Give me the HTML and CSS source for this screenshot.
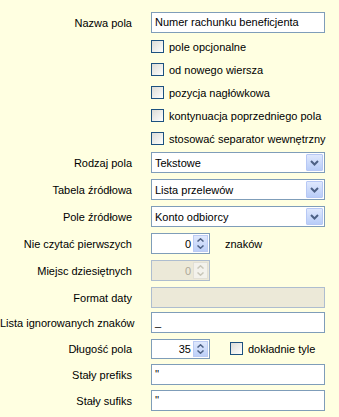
FILE: index.html
```html
<!DOCTYPE html>
<html>
<head>
    <title>Właściwości pola</title>
    <link rel="stylesheet" href="styles.css">
</head>
<body>
    <div class="form">
        <div class="row">
            <label class="caption">Nazwa pola</label>
            <div class="edit">Numer rachunku beneficjenta</div>
        </div>
        <div class="checks">
            <div class="check-row"><span class="box"></span>pole opcjonalne</div>
            <div class="check-row"><span class="box"></span>od nowego wiersza</div>
            <div class="check-row"><span class="box"></span>pozycja nagłówkowa</div>
            <div class="check-row"><span class="box"></span>kontynuacja poprzedniego pola</div>
            <div class="check-row"><span class="box"></span>stosować separator wewnętrzny</div>
        </div>
        <div class="row first-select">
            <label class="caption">Rodzaj pola</label>
            <div class="combo"><span>Tekstowe</span><span class="drop"><svg width="9" height="6" viewBox="0 0 9 6"><path d="M1 1 L4.5 4.5 L8 1" fill="none" stroke="#4d6185" stroke-width="2"/></svg></span></div>
        </div>
        <div class="row step">
            <label class="caption">Tabela źródłowa</label>
            <div class="combo"><span>Lista przelewów</span><span class="drop"><svg width="9" height="6" viewBox="0 0 9 6"><path d="M1 1 L4.5 4.5 L8 1" fill="none" stroke="#4d6185" stroke-width="2"/></svg></span></div>
        </div>
        <div class="row step">
            <label class="caption">Pole źródłowe</label>
            <div class="combo"><span>Konto odbiorcy</span><span class="drop"><svg width="9" height="6" viewBox="0 0 9 6"><path d="M1 1 L4.5 4.5 L8 1" fill="none" stroke="#4d6185" stroke-width="2"/></svg></span></div>
        </div>
        <div class="row step">
            <label class="caption">Nie czytać pierwszych</label>
            <div class="inline">
                <div class="spin"><span class="value">0</span><span class="arrows"><svg width="7" height="4" viewBox="0 0 7 4"><path d="M0.5 3.5 L3.5 0.8 L6.5 3.5" fill="none" stroke="#4d6185" stroke-width="1.5"/></svg><svg width="7" height="4" viewBox="0 0 7 4"><path d="M0.5 0.5 L3.5 3.2 L6.5 0.5" fill="none" stroke="#4d6185" stroke-width="1.5"/></svg></span></div>
                <span class="unit">znaków</span>
            </div>
        </div>
        <div class="row step">
            <label class="caption">Miejsc dziesiętnych</label>
            <div class="spin disabled"><span class="value">0</span><span class="arrows"><svg width="7" height="4" viewBox="0 0 7 4"><path d="M0.5 3.5 L3.5 0.8 L6.5 3.5" fill="none" stroke="#c9c7ba" stroke-width="1.5"/></svg><svg width="7" height="4" viewBox="0 0 7 4"><path d="M0.5 0.5 L3.5 3.2 L6.5 0.5" fill="none" stroke="#c9c7ba" stroke-width="1.5"/></svg></span></div>
        </div>
        <div class="row step">
            <label class="caption">Format daty</label>
            <div class="edit disabled"></div>
        </div>
        <div class="row step-small">
            <label class="caption">Lista ignorowanych znaków</label>
            <div class="edit">_</div>
        </div>
        <div class="row step-mid">
            <label class="caption">Długość pola</label>
            <div class="inline">
                <div class="spin short"><span class="value">35</span><span class="arrows"><svg width="7" height="4" viewBox="0 0 7 4"><path d="M0.5 3.5 L3.5 0.8 L6.5 3.5" fill="none" stroke="#4d6185" stroke-width="1.5"/></svg><svg width="7" height="4" viewBox="0 0 7 4"><path d="M0.5 0.5 L3.5 3.2 L6.5 0.5" fill="none" stroke="#4d6185" stroke-width="1.5"/></svg></span></div>
                <span class="exact"><span class="box"></span>dokładnie tyle</span>
            </div>
        </div>
        <div class="row step-mid">
            <label class="caption">Stały prefiks</label>
            <div class="edit">''</div>
        </div>
        <div class="row step-mid">
            <label class="caption">Stały sufiks</label>
            <div class="edit">''</div>
        </div>
    </div>
</body>
</html>
```

FILE: styles.css
```css
body {
    margin: 0;
    background-color: #ffffe1;
    font-family: "Liberation Sans", Arial, sans-serif;
    font-size: 11px;
    color: #000000;
}
.form {
    display: flex;
    flex-direction: column;
    padding-top: 12px;
    width: 325px;
}
.row {
    display: grid;
    grid-template-columns: 132px 174px;
    column-gap: 19px;
    align-items: center;
    height: 21px;
}
.caption {
    text-align: right;
    white-space: nowrap;
}
.edit {
    box-sizing: border-box;
    height: 21px;
    border: 1px solid #7f9db9;
    background-color: #ffffff;
    padding: 3px 3px 0 3px;
    white-space: nowrap;
    overflow: hidden;
}
.edit.disabled {
    background-color: #ece9d8;
    border-color: #aebdcf;
}
.checks {
    display: flex;
    flex-direction: column;
    padding-left: 151px;
    margin-top: 2px;
    width: 188px;
}
.check-row {
    display: flex;
    align-items: center;
    height: 23px;
    white-space: nowrap;
}
.box {
    display: inline-block;
    box-sizing: border-box;
    width: 13px;
    height: 13px;
    border: 1px solid #1c5180;
    background: linear-gradient(135deg, #dcdcd7 0%, #f4f4f2 70%, #ffffff 100%);
    margin-right: 5px;
    flex-shrink: 0;
}
.first-select {
    margin-top: 2px;
}
.step {
    margin-top: 6px;
}
.step-small {
    margin-top: 4px;
}
.step-mid {
    margin-top: 5px;
}
.combo {
    box-sizing: border-box;
    height: 21px;
    border: 1px solid #7f9db9;
    background-color: #ffffff;
    display: flex;
    align-items: center;
    justify-content: space-between;
    padding: 1px 1px 1px 3px;
}
.drop {
    box-sizing: border-box;
    width: 17px;
    height: 17px;
    background: linear-gradient(#dfe8fd, #b9cdf8);
    border: 1px solid #b7c8f5;
    border-radius: 1px;
    display: flex;
    align-items: center;
    justify-content: center;
}
.inline {
    display: flex;
    align-items: center;
}
.spin {
    box-sizing: border-box;
    width: 59px;
    height: 21px;
    border: 1px solid #7f9db9;
    background-color: #ffffff;
    display: flex;
    align-items: center;
    justify-content: flex-end;
    padding: 1px;
}
.spin.short {
    height: 20px;
}
.spin .value {
    padding-right: 2px;
}
.arrows {
    box-sizing: border-box;
    width: 15px;
    height: 100%;
    background: linear-gradient(#dfe8fd, #bdd0f8);
    border: 1px solid #bccbf3;
    display: flex;
    flex-direction: column;
    align-items: center;
    justify-content: space-evenly;
}
.spin.disabled {
    background-color: #ece9d8;
    border-color: #aebdcf;
    color: #aca899;
}
.spin.disabled .arrows {
    background: #f3f2ec;
    border-color: #e2e0d6;
}
.unit {
    margin-left: 15px;
}
.exact {
    display: flex;
    align-items: center;
    margin-left: 20px;
}
```
